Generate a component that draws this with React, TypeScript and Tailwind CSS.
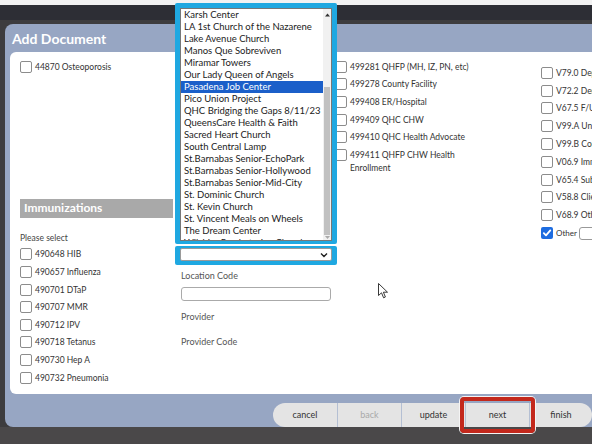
import React from 'react';

// 复选框
const Box: React.FC<{ checked?: boolean }> = ({ checked }) =>
  checked ? (
    <span className="flex h-[12px] w-[12px] shrink-0 items-center justify-center rounded-[2px] bg-[#1d6ce0]">
      <svg width="10" height="10" viewBox="0 0 10 10">
        <path d="M1.8 5.2 L4 7.4 L8.3 2.4" fill="none" stroke="#fff" strokeWidth="1.8" strokeLinecap="round" strokeLinejoin="round" />
      </svg>
    </span>
  ) : (
    <span className="block h-[12px] w-[12px] shrink-0 rounded-[2px] border border-[#8c8c8c] bg-white" />
  );

const Row: React.FC<{ label: string; h?: string }> = ({ label, h = 'h-[17.6px]' }) => (
  <div className={`flex items-center gap-[3px] ${h}`}>
    <Box />
    <span className="whitespace-nowrap text-[8.5px] leading-[12px] text-[#333]">{label}</span>
  </div>
);

const immunizations = [
  '490648 HIB',
  '490657 Influenza',
  '490701 DTaP',
  '490707 MMR',
  '490712 IPV',
  '490718 Tetanus',
  '490730 Hep A',
  '490732 Pneumonia',
];

const referrals = [
  '499281 QHFP (MH, IZ, PN, etc)',
  '499278 County Facility',
  '499408 ER/Hospital',
  '499409 QHC CHW',
  '499410 QHC Health Advocate',
];

const vcodes = [
  'V79.0 Depression screening',
  'V72.2 Dental exam',
  'V67.5 F/U exam',
  'V99.A Unconfirmed',
  'V99.B Completed',
  'V06.9 Immunization',
  'V65.4 Substance',
  'V58.8 Client',
  'V68.9 Other',
];

const locations = [
  'Karsh Center',
  'LA 1st Church of the Nazarene',
  'Lake Avenue Church',
  'Manos Que Sobreviven',
  'Miramar Towers',
  'Our Lady Queen of Angels',
  'Pasadena Job Center',
  'Pico Union Project',
  'QHC Bridging the Gaps 8/11/23',
  'QueensCare Health & Faith',
  'Sacred Heart Church',
  'South Central Lamp',
  'St.Barnabas Senior-EchoPark',
  'St.Barnabas Senior-Hollywood',
  'St.Barnabas Senior-Mid-City',
  'St. Dominic Church',
  'St. Kevin Church',
  'St. Vincent Meals on Wheels',
  'The Dream Center',
  'Wilshire Presbyterian Church',
];

const buttons = [
  { label: 'cancel', muted: false },
  { label: 'back', muted: true },
  { label: 'update', muted: false },
  { label: 'next', muted: false },
  { label: 'finish', muted: false },
];

export default function App() {
  return (
    <div className="relative h-[444px] w-[592px] overflow-hidden bg-[#3d3c3e] font-['Lato','Open_Sans',sans-serif]">
      {/* 顶部条 */}
      <div className="h-[5px] bg-[#f2f2f2]" />
      <div className="h-[15px] bg-[#2d2e35]" />
      <div className="h-[4px]" />

      {/* 弹窗 */}
      <div className="ml-[5px] flex h-[403px] flex-col rounded-l-[8px] bg-[#97a6c3]">
        <div className="flex h-[28px] items-center pl-[7px] text-[14px] font-bold text-white">Add Document</div>

        <div className="ml-[5px] flex h-[342px] overflow-hidden rounded-l-[6px] bg-white">
          {/* 左列 */}
          <div className="w-[165px] shrink-0 pl-[10px] pt-[6px]">
            <Row label="44870 Osteoporosis" />
            <div className="mt-[123px] flex h-[19px] w-[153px] items-center bg-[#a9a9a9] pl-[4px] text-[12px] font-bold text-white">
              Immunizations
            </div>
            <div className="mt-[14px] text-[8.5px] leading-[12px] text-[#444]">Please select</div>
            <div className="mt-[2px]">
              {immunizations.map((l) => (
                <Row key={l} label={l} />
              ))}
            </div>
          </div>

          {/* 中列 */}
          <div className="w-[160px] shrink-0 pt-[194px]">
            <div className="w-[162px] rounded-[2px] bg-[#1fa8e1] px-[5px] py-[2px] pb-[4px]">
              <div className="flex h-[13px] items-center justify-end rounded-[2px] border border-[#9a9a9a] bg-white pr-[3px]">
                <svg width="8" height="6" viewBox="0 0 8 6">
                  <path d="M1 1.5 L4 4.5 L7 1.5" fill="none" stroke="#222" strokeWidth="1.4" />
                </svg>
              </div>
            </div>
            <div className="pl-[6px]">
              <div className="mt-[5px] text-[9px] leading-[12px] text-[#555]">Location Code</div>
              <div className="mt-[5px] h-[14px] w-[150px] rounded-[3px] border border-[#aaa] bg-white" />
              <div className="mt-[10px] text-[9px] leading-[12px] text-[#555]">Provider</div>
              <div className="mt-[13px] text-[9px] leading-[12px] text-[#555]">Provider Code</div>
            </div>
          </div>

          {/* 第三列 */}
          <div className="w-[205px] shrink-0 pt-[6px]">
            {referrals.map((l) => (
              <Row key={l} label={l} />
            ))}
            <div className="flex items-start gap-[3px] pt-[3px]">
              <Box />
              <span className="w-[120px] text-[8.5px] leading-[13px] text-[#333]">499411 QHFP CHW Health Enrollment</span>
            </div>
          </div>

          {/* 第四列 */}
          <div className="shrink-0 pl-[1px] pt-[12px]">
            {vcodes.map((l) => (
              <Row key={l} label={l} h="h-[17.8px]" />
            ))}
            <div className="flex h-[17.8px] items-center gap-[3px]">
              <Box checked />
              <span className="text-[8px] leading-[12px] text-[#333]">Other</span>
              <span className="-ml-[1px] block h-[13px] w-[60px] rounded-[3px] border border-[#999] bg-white" />
            </div>
          </div>
        </div>

        {/* 按钮 */}
        <div className="flex flex-1 items-end justify-end">
          <div className="flex h-[24px] overflow-hidden rounded-full bg-[#e4e4e4]">
            {buttons.map((b, i) => (
              <div
                key={b.label}
                className={`flex h-full items-center justify-center text-[9px] ${i === 4 ? 'w-[63px]' : 'w-[64px]'} ${
                  i > 0 ? 'border-l border-[#b4bfd3]' : ''
                } ${b.muted ? 'text-[#a9a9a9]' : 'text-[#333]'}`}
              >
                {b.label}
              </div>
            ))}
          </div>
        </div>
      </div>
      <div className="h-[17px] bg-[#4a4849]" />

      {/* 展开的下拉列表 */}
      <div className="absolute left-[175px] top-[3px] h-[241px] w-[162px] rounded-[2px] bg-[#1fa8e1] px-[5px] pb-[3px] pt-[5px]">
        <div className="flex h-full border border-[#777] bg-white">
          <div className="flex-1 overflow-hidden">
            {locations.map((l) => (
              <div
                key={l}
                className={`h-[12px] whitespace-nowrap pl-[3px] text-[9.5px] leading-[12px] ${
                  l === 'Pasadena Job Center' ? 'bg-[#1b5fc9] text-white' : 'text-[#222]'
                }`}
              >
                {l}
              </div>
            ))}
          </div>
          <div className="flex w-[8px] flex-col bg-[#f1f1f1]">
            <div className="flex h-[12px] items-center justify-center">
              <svg width="5" height="4" viewBox="0 0 5 4">
                <path d="M0 3.5 L2.5 0.5 L5 3.5 Z" fill="#333" />
              </svg>
            </div>
            <div className="h-[66px]" />
            <div className="mx-[1px] h-[148px] bg-[#c1c1c1]" />
            <div className="flex flex-1 items-center justify-center">
              <svg width="5" height="3" viewBox="0 0 5 3">
                <path d="M0 0 L2.5 3 L5 0 Z" fill="#aaa" />
              </svg>
            </div>
          </div>
        </div>
      </div>

      {/* 鼠标指针 */}
      <svg className="absolute left-[378px] top-[283px]" width="11" height="16" viewBox="0 0 11 16">
        <path d="M0.5 0.5 L0.5 12.5 L3.5 9.8 L5.6 14.8 L7.4 14 L5.4 9.2 L9.5 9.2 Z" fill="#fff" stroke="#222" strokeWidth="0.9" strokeLinejoin="round" />
      </svg>

      {/* 高亮 next 按钮 */}
      <div className="absolute left-[460px] top-[397px] h-[36px] w-[75px] rounded-[4px] border-[4px] border-[#c3281c] shadow-[0_0_0_1px_#f4f4f4]" />
    </div>
  );
}
